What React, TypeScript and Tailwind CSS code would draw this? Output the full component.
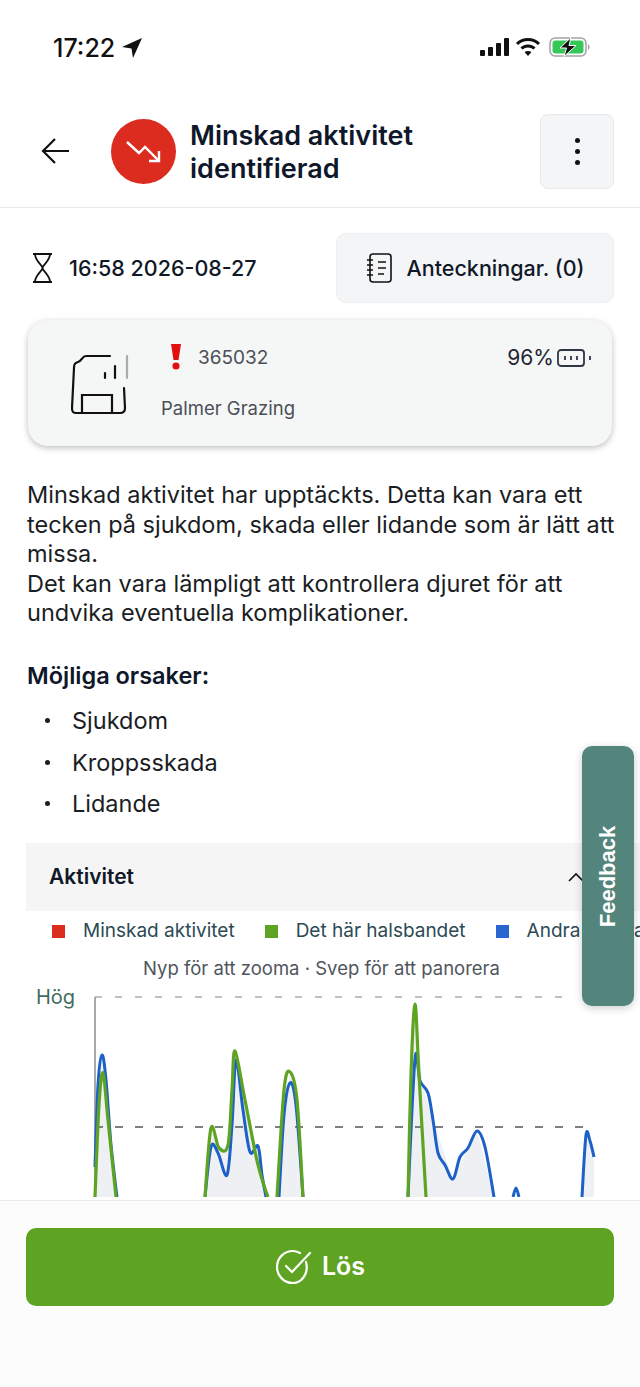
const blueLines = [
  [[95, 1172], [98, 1090], [102, 1060], [106, 1085], [111, 1150], [117, 1202]],
  [[205, 1202], [211, 1152], [218, 1158], [227, 1180], [232, 1130], [236, 1065], [243, 1115], [250, 1157], [258, 1151], [262, 1180], [266, 1202]],
  [[279, 1202], [284, 1120], [290, 1088], [296, 1110], [303, 1202]],
  [[408, 1202], [415, 1064], [420, 1086], [428, 1098], [433, 1125], [438, 1158], [445, 1170], [453, 1184], [460, 1162], [468, 1153], [477, 1136], [485, 1152], [494, 1202]],
  [[513, 1202], [516, 1193], [519, 1202]],
  [[582, 1202], [586, 1140], [590, 1146], [594, 1162]],
];

const greenLines = [
  [[95, 1202], [99, 1110], [103, 1078], [108, 1125], [116, 1202]],
  [[205, 1202], [211, 1133], [219, 1153], [228, 1150], [232, 1095], [235, 1056], [245, 1105], [258, 1170], [268, 1202]],
  [[277, 1202], [284, 1095], [290, 1077], [297, 1105], [303, 1202]],
  [[408, 1202], [411, 1080], [415, 1009], [419, 1080], [426, 1202]],
];

const fills = [
  "M95 1202 L95 1172 L102 1060 L111 1150 L117 1202 Z",
  "M205 1202 L211 1135 L219 1153 L228 1150 L235 1056 L258 1160 L268 1202 Z",
  "M277 1202 L290 1077 L297 1105 L303 1202 Z",
  "M408 1202 L415 1009 L423 1092 L433 1125 L453 1184 L468 1153 L477 1136 L494 1202 Z",
  "M582 1202 L586 1140 L594 1162 L594 1202 Z",
];

// catmull-rom through the sampled points
function smooth(pts: number[][]) {
  let d = `M${pts[0][0]} ${pts[0][1]}`;
  for (let i = 0; i < pts.length - 1; i++) {
    const p0 = pts[Math.max(i - 1, 0)];
    const p1 = pts[i];
    const p2 = pts[i + 1];
    const p3 = pts[Math.min(i + 2, pts.length - 1)];
    const c1x = p1[0] + (p2[0] - p0[0]) / 6;
    const c1y = p1[1] + (p2[1] - p0[1]) / 6;
    const c2x = p2[0] - (p3[0] - p1[0]) / 6;
    const c2y = p2[1] - (p3[1] - p1[1]) / 6;
    d += ` C${c1x} ${c1y} ${c2x} ${c2y} ${p2[0]} ${p2[1]}`;
  }
  return d;
}

function StatusBar() {
  return (
    <div className="flex h-[100px] items-start justify-between pl-[53px] pr-[49px] pt-[33px]">
      <div className="flex items-center gap-[6px]">
        <span className="text-[25px] leading-[30px] font-medium text-[#111]">17:22</span>
        <svg width="22" height="22" viewBox="0 0 22 22">
          <path d="M21 1 L1 10 L10.5 11.5 L12 21 Z" fill="#111" />
        </svg>
      </div>
      <div className="flex items-center gap-[6px] pt-[4px]">
        <svg width="30" height="20" viewBox="0 0 30 20" fill="#111">
          <rect x="1" y="13" width="5" height="6" rx="1" />
          <rect x="9" y="10" width="5" height="9" rx="1" />
          <rect x="17" y="6" width="5" height="13" rx="1" />
          <rect x="25" y="1" width="5" height="18" rx="1" />
        </svg>
        <svg width="26" height="20" viewBox="0 0 26 20" fill="none" stroke="#111" strokeWidth="3">
          <path d="M2 7 C8 1 18 1 24 7" />
          <path d="M6.5 11.5 C10 8 16 8 19.5 11.5" />
          <path d="M13 19 L9.5 15 C11.5 13.5 14.5 13.5 16.5 15 Z" fill="#111" stroke="none" />
        </svg>
        <svg width="42" height="20" viewBox="0 0 42 20" className="ml-[2px]">
          <rect x="1" y="1" width="36" height="18" rx="5" fill="none" stroke="#a3a3a3" strokeWidth="1.5" />
          <rect x="3.5" y="3.5" width="31" height="13" rx="3" fill="#36c759" />
          <path d="M39 7 C41 8 41 12 39 13 Z" fill="#a3a3a3" />
          <path d="M22 0.5 L11 11 L17.5 11 L15 19.5 L27 8.5 L20 8.5 Z" fill="#111" stroke="#fff" strokeWidth="1" />
        </svg>
      </div>
    </div>
  );
}

function Header() {
  return (
    <div className="flex h-[108px] items-start border-b border-[#e9eaec] pl-[41px] pr-[26px] pt-[14px]">
      <svg width="30" height="28" viewBox="0 0 30 28" fill="none" stroke="#111" strokeWidth="2.2" className="mt-[23px]">
        <path d="M28 14 H2 M14 2 L2 14 L14 26" />
      </svg>
      <div className="ml-[40px] mt-[5px] flex h-[65px] w-[65px] shrink-0 items-center justify-center rounded-full bg-[#dc2c20]">
        <svg width="36" height="24" viewBox="0 0 36 24" fill="none" stroke="#fff" strokeWidth="2.4">
          <path d="M1 2 L13 13 L19 7 L33 21 M33 11 V21 H23" />
        </svg>
      </div>
      <h1 className="ml-[14px] mt-[5px] w-[300px] text-[27px] leading-[33px] font-semibold text-[#0f172a]">
        Minskad aktivitet identifierad
      </h1>
      <button className="ml-auto flex h-[75px] w-[74px] shrink-0 flex-col items-center justify-center gap-[6px] rounded-[8px] border border-[#e8e9eb] bg-[#f4f5f6]">
        <span className="h-[5px] w-[5px] rounded-full bg-[#111]" />
        <span className="h-[5px] w-[5px] rounded-full bg-[#111]" />
        <span className="h-[5px] w-[5px] rounded-full bg-[#111]" />
      </button>
    </div>
  );
}

function TimeRow() {
  return (
    <div className="mt-[25px] flex items-center justify-between pl-[32px] pr-[26px]">
      <div className="flex items-center gap-[16px]">
        <svg width="21" height="30" viewBox="0 0 21 30" fill="none" stroke="#111" strokeWidth="1.8">
          <path d="M1 1 H20 M1 29 H20 M3 1 C3 8 10.5 12 10.5 15 C10.5 18 3 22 3 29 M18 1 C18 8 10.5 12 10.5 15 C10.5 18 18 22 18 29" />
        </svg>
        <span className="text-[21.5px] leading-[28px] font-medium text-[#111827]">16:58 2026-08-27</span>
      </div>
      <button className="flex h-[70px] w-[278px] items-center justify-center gap-[14px] rounded-[10px] border border-[#eceef0] bg-[#f4f5f6]">
        <svg width="27" height="30" viewBox="0 0 27 30" fill="none" stroke="#111" strokeWidth="1.6">
          <rect x="4" y="1" width="21" height="28" rx="3" />
          <path d="M1 7 H7 M1 12 H7 M1 17 H7 M1 22 H7 M12 9 H20 M12 15 H20 M12 21 H18" />
        </svg>
        <span className="text-[21.5px] leading-[28px] font-medium text-[#111827]">Anteckningar. (0)</span>
      </button>
    </div>
  );
}

function DeviceCard() {
  return (
    <div className="mx-[28px] mt-[17px] flex h-[126px] items-start rounded-[20px] bg-[#f5f6f6] pl-[43px] pr-[19px] shadow-[0_2px_6px_rgba(0,0,0,0.25)]">
      <svg width="60" height="62" viewBox="0 0 60 62" fill="none" stroke="#111" strokeWidth="2.2" strokeLinecap="round" className="mt-[34px] shrink-0">
        <path d="M39 2 H15 C11 2 11 7 7 8 C4 9 3 10 3 14 L1 54 C1 58 2 59 5 59 H49 C52 59 54 58 54 54 L53 34" />
        <path d="M11 59 V41 H41 V59" />
        <path d="M34 22 V22 M44 12 V24" />
        <path d="M34 19 V24" />
        <path d="M56 2 V24" stroke="#a8abb0" />
      </svg>
      <div className="ml-[30px] flex flex-col">
        <div className="mt-[24px] flex items-center">
          <svg width="14" height="27" viewBox="0 0 14 27" fill="#e01010" className="-mt-[4px] ml-[8px]">
            <path d="M2 1 H12 L9.5 17 H4.5 Z" />
            <circle cx="7" cy="23" r="3.6" />
          </svg>
          <span className="ml-[15px] text-[19px] leading-[28px] text-[#4b4f57]">365032</span>
        </div>
        <span className="mt-[23px] text-[18.5px] leading-[26px] text-[#4b4f57]">Palmer Grazing</span>
      </div>
      <div className="ml-auto mt-[24px] flex items-center gap-[3px]">
        <span className="text-[21px] leading-[28px] text-[#1f2430]">96%</span>
        <svg width="36" height="20" viewBox="0 0 36 20" fill="none" stroke="#2e3646" strokeWidth="1.8">
          <rect x="1" y="2" width="26" height="16" rx="3" />
          <path d="M8 8 V12 M14 8 V12 M20 8 V12 M33 8 V12" />
        </svg>
      </div>
    </div>
  );
}

function Chart() {
  return (
    <svg width="640" height="212" viewBox="0 990 640 212" className="mt-[4px] block">
      {fills.map((d, i) => (
        <path key={i} d={d} fill="#eff0f4" />
      ))}
      <path d="M95 1002 H575" stroke="#a9adb1" strokeWidth="1.5" strokeDasharray="7 13" fill="none" />
      <path d="M95 1132 H592" stroke="#7b7f84" strokeWidth="2" strokeDasharray="8 12" fill="none" />
      <path d="M95 1002 V1202" stroke="#8a8d91" strokeWidth="1.5" fill="none" />
      {blueLines.map((pts, i) => (
        <path key={i} d={smooth(pts)} stroke="#1c60c8" strokeWidth="3" fill="none" />
      ))}
      {greenLines.map((pts, i) => (
        <path key={i} d={smooth(pts)} stroke="#5ea422" strokeWidth="3.2" fill="none" />
      ))}
      <text x="36" y="1009" fontSize="20" fill="#3f6b60">Hög</text>
    </svg>
  );
}

export default function App() {
  return (
    <div className="relative h-[1387px] w-[640px] overflow-hidden bg-white font-['Inter',sans-serif]">
      <StatusBar />
      <Header />
      <TimeRow />
      <DeviceCard />

      <div className="mt-[34px] px-[27px] text-[23.5px] leading-[29.5px] text-[#1a1d24]">
        <p className="w-[590px]">
          Minskad aktivitet har upptäckts. Detta kan vara ett tecken på sjukdom, skada eller lidande som är lätt att missa.
        </p>
        <p className="w-[590px]">
          Det kan vara lämpligt att kontrollera djuret för att undvika eventuella komplikationer.
        </p>
        <h2 className="mt-[33px] font-semibold text-[#0f172a]">Möjliga orsaker:</h2>
        <ul className="mt-[16px] flex flex-col gap-[12px] pl-[18px]">
          {["Sjukdom", "Kroppsskada", "Lidande"].map((item) => (
            <li key={item} className="flex items-center gap-[22px]">
              <span className="h-[5px] w-[5px] rounded-full bg-[#1a1d24]" />
              {item}
            </li>
          ))}
        </ul>
      </div>

      <div className="ml-[26px] mt-[24px] flex h-[68px] items-center justify-between bg-[#f5f5f5] pl-[23px] pr-[56px]">
        <span className="text-[21px] font-semibold text-[#111827]">Aktivitet</span>
        <svg width="16" height="10" viewBox="0 0 16 10" fill="none" stroke="#111" strokeWidth="1.6">
          <path d="M1 9 L8 2 L15 9" />
        </svg>
      </div>

      <div className="mt-[7px] flex h-[27px] items-center overflow-hidden whitespace-nowrap pl-[52px] text-[19px] text-[#2c4a54]">
        <span className="h-[13px] w-[13px] shrink-0 bg-[#dc2c20]" />
        <span className="ml-[18px]">Minskad aktivitet</span>
        <span className="ml-[30px] h-[13px] w-[13px] shrink-0 bg-[#5ea422]" />
        <span className="ml-[18px]">Det här halsbandet</span>
        <span className="ml-[30px] h-[13px] w-[13px] shrink-0 bg-[#2b66d0]" />
        <span className="ml-[18px]">Andra halsband</span>
      </div>
      <p className="mt-[10px] pl-[143px] text-[18.5px] leading-[26px] text-[#50555c]">
        Nyp för att zooma · Svep för att panorera
      </p>
      <Chart />

      {/* feedback tab sits over the page */}
      <div className="absolute left-[582px] top-[746px] flex h-[260px] w-[52px] items-center justify-center rounded-[10px] bg-[#54857c] shadow-[0_2px_8px_rgba(0,0,0,0.2)]">
        <span className="-rotate-90 whitespace-nowrap font-['Liberation_Sans',sans-serif] text-[22px] font-bold text-white">
          Feedback
        </span>
      </div>

      {/* footer pinned over the chart */}
      <div className="absolute bottom-0 left-0 right-0 h-[187px] border-t border-[#e9eaec] bg-[#fcfcfc] px-[26px] pt-[27px]">
        <button className="flex h-[78px] w-full items-center justify-center gap-[10px] rounded-[10px] bg-[#5ea422]">
          <svg width="37" height="36" viewBox="0 0 37 36" fill="none" stroke="#fff" strokeWidth="2.2" strokeLinecap="round">
            <path d="M31 13 C34 24 27 34 18 34 C9 34 2 27 2 18 C2 9 9 2 18 2 C21 2 23 3 25 4" />
            <path d="M11 17 L17 23 L35 4" />
          </svg>
          <span className="text-[25px] font-semibold text-white">Lös</span>
        </button>
      </div>
    </div>
  );
}
